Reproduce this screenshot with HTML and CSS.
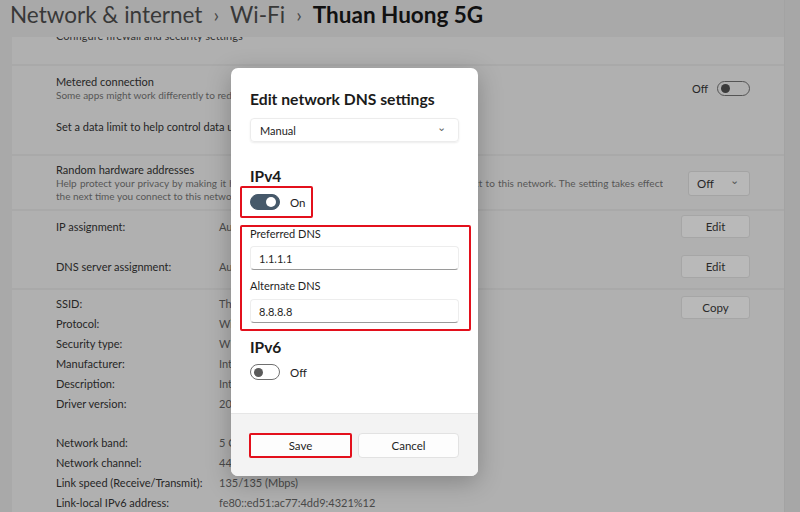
FILE: index.html
```html
<!DOCTYPE html>
<html lang="en">
<head>
    <meta charset="UTF-8">
    <meta name="viewport" content="width=device-width, initial-scale=1.0">
    <title>Thuan Huong 5G - Wi-Fi</title>
    <link rel="stylesheet" href="styles.css">
</head>
<body>
<div class="window">
    <h1 class="crumbs">
        <span class="crumb">Network &amp; internet</span>
        <span class="chev">›</span>
        <span class="crumb">Wi-Fi</span>
        <span class="chev">›</span>
        <span class="crumb current">Thuan Huong 5G</span>
    </h1>

    <div class="main">
        <div class="content">
            <section class="card card-top">
                <div class="clipped">Configure firewall and security settings</div>
            </section>

            <section class="card card-metered">
                <div class="row">
                    <div class="row-text">
                        <div class="label">Metered connection</div>
                        <div class="desc">Some apps might work differently to reduce data usage when you're connected to this network</div>
                    </div>
                    <div class="switch-wrap">
                        <span>Off</span>
                        <span class="switch"><span class="knob"></span></span>
                    </div>
                </div>
                <div class="label limit">Set a data limit to help control data usage on this network</div>
            </section>

            <section class="card card-random">
                <div class="row">
                    <div class="row-text wide">
                        <div class="label">Random hardware addresses</div>
                        <div class="desc stretch">Help protect your privacy by making it harder for people to track your device when you connect to this network. The setting takes effect</div>
                        <div class="desc">the next time you connect to this network.</div>
                    </div>
                    <div class="combo">
                        <span>Off</span>
                        <span class="combo-chev">⌄</span>
                    </div>
                </div>
            </section>

            <section class="card card-assign">
                <div class="prop-row">
                    <span class="prop-name">IP assignment:</span>
                    <span class="prop-val">Automatic (DHCP)</span>
                    <button class="btn">Edit</button>
                </div>
                <div class="prop-row second">
                    <span class="prop-name">DNS server assignment:</span>
                    <span class="prop-val">Automatic (DHCP)</span>
                    <button class="btn">Edit</button>
                </div>
            </section>

            <section class="card card-props">
                <div class="props">
                    <div class="line"><span class="prop-name">SSID:</span><span class="prop-val">Thuan Huong 5G</span></div>
                    <div class="line"><span class="prop-name">Protocol:</span><span class="prop-val">Wi-Fi 5 (802.11ac)</span></div>
                    <div class="line"><span class="prop-name">Security type:</span><span class="prop-val">WPA2-Personal</span></div>
                    <div class="line"><span class="prop-name">Manufacturer:</span><span class="prop-val">Intel Corporation</span></div>
                    <div class="line"><span class="prop-name">Description:</span><span class="prop-val">Intel(R) Wi-Fi 6 AX201 160MHz</span></div>
                    <div class="line"><span class="prop-name">Driver version:</span><span class="prop-val">20.70.27.1</span></div>
                    <div class="line blank"></div>
                    <div class="line"><span class="prop-name">Network band:</span><span class="prop-val">5 GHz</span></div>
                    <div class="line"><span class="prop-name">Network channel:</span><span class="prop-val">44</span></div>
                    <div class="line"><span class="prop-name">Link speed (Receive/Transmit):</span><span class="prop-val">135/135 (Mbps)</span></div>
                    <div class="line"><span class="prop-name">Link-local IPv6 address:</span><span class="prop-val">fe80::ed51:ac77:4dd9:4321%12</span></div>
                </div>
                <button class="btn copy">Copy</button>
            </section>
        </div>
        <div class="scroll"></div>
    </div>

    <!-- dialog over the dimmed settings page -->
    <div class="dialog">
        <div class="dialog-body">
            <h2 class="dialog-title">Edit network DNS settings</h2>
            <div class="select">
                <span>Manual</span>
                <span class="select-chev">⌄</span>
            </div>

            <h3 class="ip-head">IPv4</h3>
            <div class="mark mark-toggle">
                <span class="toggle on"><span class="dot"></span></span>
                <span class="toggle-text">On</span>
            </div>

            <div class="mark mark-dns">
                <div class="field-label">Preferred DNS</div>
                <div class="field">1.1.1.1</div>
                <div class="field-label second">Alternate DNS</div>
                <div class="field">8.8.8.8</div>
            </div>

            <h3 class="ip-head v6">IPv6</h3>
            <div class="toggle-row">
                <span class="toggle"><span class="dot"></span></span>
                <span class="toggle-text">Off</span>
            </div>
        </div>
        <div class="dialog-foot">
            <button class="dbtn save">Save</button>
            <button class="dbtn">Cancel</button>
        </div>
    </div>
</div>
</body>
</html>
```

FILE: styles.css
```css
body{
    margin: 0;
    background-color: #a9a9a9;
    font-family: "Lato", "Noto Sans", sans-serif;
    color: #262626;
}
.window{
    position: relative;
    width: 800px;
    height: 512px;
    overflow: hidden;
}
.crumbs{
    margin: 0;
    height: 37px;
    padding: 1px 0 0 10px;
    box-sizing: border-box;
    display: flex;
    align-items: flex-start;
    gap: 11px;
    font-size: 22.5px;
    line-height: 27px;
    font-weight: 400;
    color: #383838;
}
.crumbs .chev{
    font-size: 20px;
    color: #4a4a4a;
}
.crumbs .current{
    color: #111;
    font-weight: 700;
}

/* settings page (dimmed) */
.main{
    display: flex;
    height: 475px;
}
.content{
    margin-left: 12px;
    width: 773px;
    display: flex;
    flex-direction: column;
    gap: 2px;
}
.card{
    background-color: #b0b0b0;
    padding: 0 34px 0 44px;
}
.scroll{
    width: 15px;
    margin-top: -37px;
    border-left: 1px solid #a3a3a3;
    background-color: #a7a7a7;
}
.card-top{
    height: 27px;
    overflow: hidden;
}
.clipped{
    margin-top: -8px;
    font-size: 11px;
    color: #333;
}
.card-metered{
    height: 89px;
    padding-top: 9px;
    box-sizing: border-box;
}
.row{
    display: flex;
    align-items: center;
}
.row-text{
    width: 410px;
    white-space: nowrap;
    overflow: hidden;
}
.row-text + *{
    margin-left: auto;
}
.row-text.wide{
    width: 607px;
}
.label{
    font-size: 11px;
    line-height: 14px;
    color: #262626;
}
.desc{
    font-size: 10px;
    line-height: 13px;
    color: #565656;
}
.desc.stretch{
    white-space: normal;
    text-align: justify;
    text-align-last: justify;
    height: 13px;
}
.limit{
    margin-top: 18px;
    width: 410px;
    white-space: nowrap;
    overflow: hidden;
}
.switch-wrap{
    display: flex;
    align-items: center;
    gap: 9px;
    font-size: 11px;
    color: #262626;
}
.switch{
    width: 28px;
    height: 13px;
    border: 1px solid #555;
    border-radius: 8px;
    display: flex;
    align-items: center;
    padding-left: 3px;
    box-sizing: content-box;
}
.knob{
    width: 9px;
    height: 9px;
    border-radius: 50%;
    background-color: #3b3b3b;
}
.card-random{
    height: 53px;
    padding-top: 7px;
    box-sizing: border-box;
}
.combo{
    width: 62px;
    height: 25px;
    box-sizing: border-box;
    padding: 0 10px 0 8px;
    display: flex;
    align-items: center;
    justify-content: space-between;
    background-color: #b8b8b8;
    border: 1px solid #a4a4a4;
    border-radius: 3px;
    font-size: 11.5px;
}
.combo-chev{
    font-size: 11px;
    color: #555;
    margin-top: -6px;
}
.card-assign{
    height: 78px;
    box-sizing: border-box;
}
.prop-row{
    display: flex;
    align-items: center;
    height: 32px;
}
.prop-row.second{
    margin-top: 8px;
}
.prop-name{
    width: 163px;
    flex-shrink: 0;
    white-space: nowrap;
    font-size: 11px;
    color: #262626;
}
.prop-val{
    flex: 1;
    font-size: 11px;
    color: #4a4a4a;
    white-space: nowrap;
}
.btn{
    width: 69px;
    height: 23px;
    background-color: #b9b9b9;
    border: 1px solid #a6a6a6;
    border-radius: 3px;
    font-family: inherit;
    font-size: 11.5px;
    color: #2a2a2a;
    padding: 0;
}
.card-props{
    flex: 1;
    display: flex;
    align-items: flex-start;
    padding-top: 3px;
}
.props{
    flex: 1;
}
.line{
    display: flex;
    height: 20px;
    align-items: center;
}
.line.blank{
    height: 19px;
}
.copy{
    margin-top: 3px;
}

/* dialog */
.dialog{
    position: absolute;
    left: 231px;
    top: 68px;
    width: 247px;
    height: 408px;
    background-color: #fff;
    border-radius: 7px;
    box-shadow: 0 6px 24px rgba(0,0,0,0.25);
    display: flex;
    flex-direction: column;
    overflow: hidden;
}
.dialog-body{
    flex: 1;
    padding: 21px 19px 0;
}
.dialog-title{
    margin: 0;
    font-size: 15.7px;
    line-height: 20px;
    font-weight: 700;
    color: #1b1b1b;
}
.select{
    margin-top: 9px;
    height: 24px;
    box-sizing: border-box;
    border: 1px solid #ececec;
    border-radius: 4px;
    box-shadow: 0 1px 2px rgba(0,0,0,0.08);
    display: flex;
    align-items: center;
    justify-content: space-between;
    padding: 0 12px 0 9px;
    font-size: 11px;
    color: #222;
}
.select-chev{
    font-size: 11px;
    color: #666;
    margin-top: -6px;
}
.ip-head{
    margin: 23px 0 0;
    font-size: 15.5px;
    line-height: 22px;
    font-weight: 700;
    color: #1b1b1b;
}
.ip-head.v6{
    margin-top: 5px;
}
.mark{
    border: 2px solid #e3101c;
    border-radius: 2px;
    box-sizing: border-box;
    margin-left: -10px;
}
.mark-toggle{
    width: 73px;
    height: 32px;
    margin-top: -1px;
    display: flex;
    align-items: center;
    gap: 10px;
    padding-left: 8px;
}
.toggle{
    width: 30px;
    height: 16px;
    box-sizing: border-box;
    border-radius: 8px;
    border: 1px solid #707070;
    display: flex;
    align-items: center;
    padding: 0 3px;
}
.toggle .dot{
    width: 9px;
    height: 9px;
    border-radius: 50%;
    background-color: #5a5a5a;
}
.toggle.on{
    background-color: #46596a;
    border-color: #46596a;
    justify-content: flex-end;
}
.toggle.on .dot{
    background-color: #fff;
    width: 10px;
    height: 10px;
}
.toggle-text{
    font-size: 11.5px;
    color: #222;
}
.mark-dns{
    width: 231px;
    height: 106px;
    margin-top: 7px;
    padding: 0 10px 0 8px;
}
.field-label{
    font-size: 11px;
    line-height: 14px;
    color: #1f1f1f;
}
.field-label.second{
    margin-top: 9px;
}
.field{
    margin-top: 5px;
    width: 209px;
    height: 24px;
    box-sizing: border-box;
    border: 1px solid #ededed;
    border-bottom: 1px solid #9a9a9a;
    border-radius: 4px;
    display: flex;
    align-items: center;
    padding-left: 8px;
    font-size: 11px;
    color: #1f1f1f;
}
.field-label.second + .field{
    margin-top: 6px;
}
.toggle-row{
    margin-top: 6px;
    display: flex;
    align-items: center;
    gap: 10px;
}
.dialog-foot{
    height: 63px;
    box-sizing: border-box;
    background-color: #f3f3f3;
    border-top: 1px solid #e6e6e6;
    display: flex;
    gap: 6px;
    padding: 19px 19px 0 18px;
}
.dbtn{
    flex: 1;
    height: 25px;
    background-color: #fdfdfd;
    border: 1px solid #e2e2e2;
    border-radius: 4px;
    font-family: inherit;
    font-size: 11.5px;
    color: #1f1f1f;
    padding: 0;
}
.dbtn.save{
    border: 2px solid #e3101c;
    border-radius: 2px;
}
```
